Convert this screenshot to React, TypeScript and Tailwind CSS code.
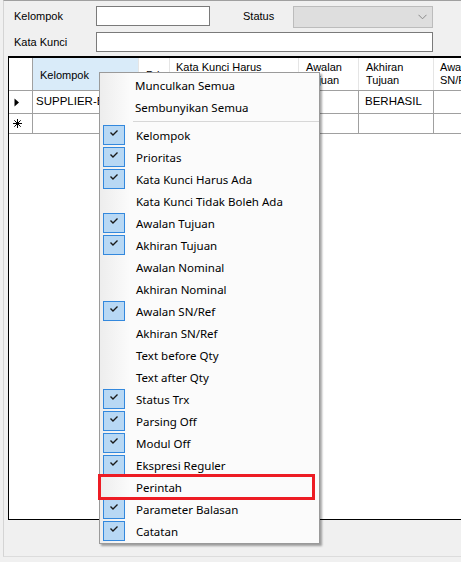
import React from "react";

const menuItems: { label: string; checked: boolean }[] = [
  { label: "Kelompok", checked: true },
  { label: "Prioritas", checked: true },
  { label: "Kata Kunci Harus Ada", checked: true },
  { label: "Kata Kunci Tidak Boleh Ada", checked: false },
  { label: "Awalan Tujuan", checked: true },
  { label: "Akhiran Tujuan", checked: true },
  { label: "Awalan Nominal", checked: false },
  { label: "Akhiran Nominal", checked: false },
  { label: "Awalan SN/Ref", checked: true },
  { label: "Akhiran SN/Ref", checked: false },
  { label: "Text before Qty", checked: false },
  { label: "Text after Qty", checked: false },
  { label: "Status Trx", checked: true },
  { label: "Parsing Off", checked: true },
  { label: "Modul Off", checked: true },
  { label: "Ekspresi Reguler", checked: true },
  { label: "Perintah", checked: false },
  { label: "Parameter Balasan", checked: true },
  { label: "Catatan", checked: true },
];

const cols = "grid grid-cols-[24px_106px_31px_129px_60px_75px_80px]";

function CheckBox() {
  return (
    <div className="ml-[3px] mt-[1px] h-[20px] w-[22px] border border-[#3388dd] bg-[#b8d8f4]">
      <svg width="20" height="18" viewBox="0 0 20 18">
        <path d="M6.5 6.5 L9 9 L13.5 4.5" fill="none" stroke="#1a1a1a" strokeWidth="1.4" />
      </svg>
    </div>
  );
}

function ContextMenu() {
  return (
    <div className="absolute left-[99px] top-[72px] w-[221px] border border-[#9a9a9a] bg-[linear-gradient(to_right,#ededed,#fbfbfb_30px,#fbfbfb)] py-[1px] shadow-[2px_2px_2px_rgba(0,0,0,0.35)] font-['Noto_Sans',sans-serif] text-[11.5px] text-black">
      <div className="flex h-[22px] items-center pl-[35px] pt-[2px]">Munculkan Semua</div>
      <div className="flex h-[22px] items-center pl-[35px] pt-[2px]">Sembunyikan Semua</div>
      <div className="flex h-[6px] items-center pl-[33px]">
        <div className="h-px w-full bg-[#d7d7d7]" />
      </div>
      {menuItems.map((it) => (
        <div key={it.label} className="flex h-[22px]">
          <div className="w-[36px] shrink-0">{it.checked && <CheckBox />}</div>
          <div className="flex items-center pt-[2px]">{it.label}</div>
        </div>
      ))}
    </div>
  );
}

function RowArrow() {
  return (
    <svg width="6" height="9" viewBox="0 0 6 9">
      <path d="M0.5 0.5 L5 4.5 L0.5 8.5 Z" fill="#000" />
    </svg>
  );
}

function NewRowStar() {
  return (
    <svg width="9" height="9" viewBox="0 0 9 9" stroke="#000" strokeWidth="1">
      <path d="M4.5 0 V9 M0 4.5 H9 M1.3 1.3 L7.7 7.7 M7.7 1.3 L1.3 7.7" />
    </svg>
  );
}

function DataGrid() {
  const head = "border-r border-[#e5e5e5] bg-white pl-[6px] leading-[13px] flex flex-col justify-center";
  const cell = "border-r border-[#a0a0a0] bg-white";
  return (
    <div className="ml-[4px] mt-[4px] h-[464px] w-[454px] overflow-hidden border-b border-l border-t-2 border-black bg-white">
      <div className={`${cols} h-[33px] border-b border-[#a0a0a0]`}>
        <div className="border-r border-[#a0a0a0] bg-white" />
        <div className="flex items-center border-r border-[#e5e5e5] bg-[#d9ebf9] pl-[7px] pt-[2px]">Kelompok</div>
        <div className={`${head} overflow-hidden whitespace-nowrap pl-[7px]`}>
          <span className="pt-[2px]">Prioritas</span>
        </div>
        <div className={head}>
          <span>Kata Kunci Harus</span>
          <span>Ada</span>
        </div>
        <div className={`${head} pl-[7px]`}>
          <span>Awalan</span>
          <span>Tujuan</span>
        </div>
        <div className={`${head} pl-[7px]`}>
          <span>Akhiran</span>
          <span>Tujuan</span>
        </div>
        <div className={head}>
          <span>Awalan</span>
          <span>SN/Ref</span>
        </div>
      </div>
      <div className={`${cols} h-[23px] border-b border-[#a0a0a0]`}>
        <div className={`${cell} flex items-center pl-[5px]`}>
          <RowArrow />
        </div>
        <div className={`${cell} flex items-center overflow-hidden whitespace-nowrap pl-[3px] text-[11.5px]`}>SUPPLIER-BTS</div>
        <div className={cell} />
        <div className={cell} />
        <div className={cell} />
        <div className={`${cell} flex items-center pl-[6px] text-[11.5px]`}>BERHASIL</div>
        <div className={cell} />
      </div>
      <div className={`${cols} h-[20px] border-b border-[#a0a0a0]`}>
        <div className={`${cell} flex items-center pl-[4px]`}>
          <NewRowStar />
        </div>
        <div className={cell} />
        <div className={cell} />
        <div className={cell} />
        <div className={cell} />
        <div className={cell} />
        <div className={cell} />
      </div>
    </div>
  );
}

export default function App() {
  return (
    <div className="relative h-[562px] w-[461px] overflow-hidden bg-[#f0f0f0] font-['Liberation_Sans',Arial,sans-serif] text-[11px] text-black">
      <div className="ml-[3px] h-[557px] border-b border-l border-t border-b-[#dcdcdc] border-l-[#d4d4d4] border-t-[#a0a0a0]">
        <div className="pl-[10px] pt-[5px]">
          <div className="flex h-[22px] items-start">
            <div className="flex h-[20px] w-[82px] items-center">Kelompok</div>
            <div className="h-[20px] w-[114px] border border-[#7a7a7a] bg-white" />
            <div className="ml-[33px] flex h-[20px] w-[50px] items-center">Status</div>
            <div className="flex h-[22px] w-[140px] items-center justify-end border border-[#bcbcbc] bg-[#dedede] pr-[5px]">
              <svg width="9" height="6" viewBox="0 0 9 6">
                <path d="M0.5 0.8 L4.5 4.8 L8.5 0.8" fill="none" stroke="#8a8a8a" strokeWidth="1" />
              </svg>
            </div>
          </div>
          <div className="mt-[4px] flex h-[20px] items-center">
            <div className="w-[82px]">Kata Kunci</div>
            <div className="h-[20px] w-[337px] border border-[#7a7a7a] bg-white" />
          </div>
        </div>
        <DataGrid />
      </div>
      <ContextMenu />
      <div className="absolute left-[98px] top-[474px] h-[26px] w-[217px] border-[3px] border-[#ed1c24]" />
    </div>
  );
}
